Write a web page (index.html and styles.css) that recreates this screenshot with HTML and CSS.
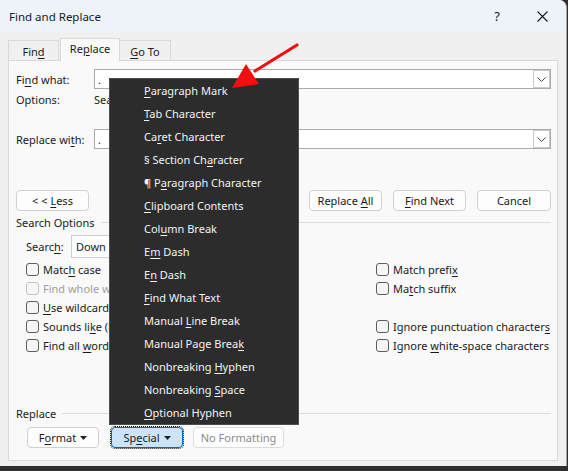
FILE: index.html
```html
<!DOCTYPE html>
<html lang="en">
<head>
    <meta charset="UTF-8">
    <title>Find and Replace</title>
    <link rel="stylesheet" href="styles.css">
</head>
<body>
    <div class="window">
        <div class="titlebar">
            <span class="title">Find and Replace</span>
            <div class="caption">
                <span class="help">?</span>
                <svg class="close" width="11" height="11" viewBox="0 0 11 11">
                    <path d="M0.5 0.5 L10.5 10.5 M10.5 0.5 L0.5 10.5" stroke="#1a1a1a" stroke-width="1.1" fill="none"/>
                </svg>
            </div>
        </div>

        <div class="tabs">
            <div class="tab tab-find"><span>Fin<u>d</u></span></div>
            <div class="tab tab-replace active"><span>Re<u>p</u>lace</span></div>
            <div class="tab tab-goto"><span><u>G</u>o To</span></div>
        </div>

        <div class="panel">
            <div class="row field-row">
                <span class="label">Fi<u>n</u>d what:</span>
                <div class="combo">
                    <span class="combo-text">.</span>
                    <span class="combo-btn">
                        <svg width="9" height="5" viewBox="0 0 9 5"><path d="M0.5 0.5 L4.5 4.5 L8.5 0.5" stroke="#444" fill="none"/></svg>
                    </span>
                </div>
            </div>
            <div class="row options-row">
                <span class="label">Options:</span>
                <span>Search Down</span>
            </div>
            <div class="row field-row replace-row">
                <span class="label">Replace wi<u>t</u>h:</span>
                <div class="combo">
                    <span class="combo-text">.</span>
                    <span class="combo-btn">
                        <svg width="9" height="5" viewBox="0 0 9 5"><path d="M0.5 0.5 L4.5 4.5 L8.5 0.5" stroke="#444" fill="none"/></svg>
                    </span>
                </div>
            </div>

            <div class="row button-row">
                <div class="btn btn-less"><span>&lt; &lt; <u>L</u>ess</span></div>
                <div class="spacer"></div>
                <div class="btn btn-wide"><span>Replace <u>A</u>ll</span></div>
                <div class="btn btn-wide"><span><u>F</u>ind Next</span></div>
                <div class="btn btn-cancel"><span>Cancel</span></div>
            </div>

            <div class="section">
                <span>Search Options</span>
                <div class="rule"></div>
            </div>

            <div class="row search-row">
                <span class="search-label">Searc<u>h</u>:</span>
                <div class="select">Down</div>
            </div>

            <div class="checks">
                <div class="check-col left-col">
                    <label class="check"><span class="box"></span><span>Matc<u>h</u> case</span></label>
                    <label class="check disabled"><span class="box"></span><span>Find whole words onl<u>y</u></span></label>
                    <label class="check"><span class="box"></span><span><u>U</u>se wildcards</span></label>
                    <label class="check"><span class="box"></span><span>Sounds li<u>k</u>e (English)</span></label>
                    <label class="check"><span class="box"></span><span>Find all <u>w</u>ord forms (English)</span></label>
                </div>
                <div class="check-col right-col">
                    <label class="check"><span class="box"></span><span>Match prefi<u>x</u></span></label>
                    <label class="check"><span class="box"></span><span>Ma<u>t</u>ch suffix</span></label>
                    <div class="check empty"></div>
                    <label class="check"><span class="box"></span><span>Ignore punctuation character<u>s</u></span></label>
                    <label class="check"><span class="box"></span><span>Ignore <u>w</u>hite-space characters</span></label>
                </div>
            </div>

            <div class="section replace-section">
                <span>Replace</span>
                <div class="rule"></div>
            </div>

            <div class="row bottom-row">
                <div class="btn btn-format"><span>F<u>o</u>rmat</span><svg class="caret" width="7" height="4" viewBox="0 0 7 4"><path d="M0 0 H7 L3.5 4 Z" fill="#222"/></svg></div>
                <div class="btn btn-special"><span>Sp<u>e</u>cial</span><svg class="caret" width="7" height="4" viewBox="0 0 7 4"><path d="M0 0 H7 L3.5 4 Z" fill="#222"/></svg></div>
                <div class="btn btn-noformat"><span>No Formatting</span></div>
            </div>
        </div>

        <div class="menu">
            <div class="item"><u>P</u>aragraph Mark</div>
            <div class="item"><u>T</u>ab Character</div>
            <div class="item">Ca<u>r</u>et Character</div>
            <div class="item">§ Section Ch<u>a</u>racter</div>
            <div class="item">¶ P<u>a</u>ragraph Character</div>
            <div class="item"><u>C</u>lipboard Contents</div>
            <div class="item">Col<u>u</u>mn Break</div>
            <div class="item">E<u>m</u> Dash</div>
            <div class="item">E<u>n</u> Dash</div>
            <div class="item"><u>F</u>ind What Text</div>
            <div class="item">Manual <u>L</u>ine Break</div>
            <div class="item">Manual Page Brea<u>k</u></div>
            <div class="item">Nonbreaking <u>H</u>yphen</div>
            <div class="item">Nonbreaking <u>S</u>pace</div>
            <div class="item"><u>O</u>ptional Hyphen</div>
        </div>

        <svg class="arrow" width="80" height="60" viewBox="0 0 80 60">
            <!-- shaft from (297,45) toward the tip at (232,88); svg origin is (225,35) -->
            <path d="M72 10 L30 36" stroke="#f01010" stroke-width="3.2" stroke-linecap="round" fill="none"/>
            <path d="M7 53 L21 29 L34 49 Z" fill="#f01010"/>
        </svg>
    </div>
</body>
</html>
```

FILE: styles.css
```css
* {
    box-sizing: border-box;
}
body {
    margin: 0;
    background-color: #2e2e2e;
    font-family: 'Noto Sans', 'Open Sans', sans-serif;
    font-size: 11px;
    color: #1a1a1a;
}
u {
    text-underline-offset: 2px;
    text-decoration-thickness: 1px;
}
.window {
    position: relative;
    width: 567px;
    height: 466px;
    background-color: #f0f0f0;
    border-top-right-radius: 8px;
    border-right: 1px solid #a8a8a8;
    overflow: hidden;
}
.titlebar {
    height: 32px;
    background-color: #eef2f9;
    display: flex;
    align-items: center;
    justify-content: space-between;
    padding: 0 0 0 9px;
}
.title {
    font-size: 11.5px;
}
.caption {
    display: flex;
    align-items: center;
}
.help {
    font-size: 13px;
    margin-right: 37px;
}
.close {
    margin-right: 18px;
}
.tabs {
    height: 28px;
    display: flex;
    align-items: flex-end;
    padding-left: 8px;
}
.tab {
    height: 20px;
    border: 1px solid #d9d9d9;
    border-bottom: none;
    background-color: #f0f0f0;
    display: flex;
    align-items: center;
    justify-content: center;
    padding-top: 2px;
}
.tab-find {
    width: 51px;
    margin-right: 1px;
}
.tab-replace {
    width: 60px;
}
.tab-goto {
    width: 51px;
    border-left: none;
}
.tab.active {
    height: 23px;
    background-color: #f9f9f9;
    margin-bottom: -1px;
    position: relative;
    z-index: 1;
    padding-top: 0;
    padding-bottom: 3px;
}
.panel {
    margin: 0 8px;
    height: 401px;
    background-color: #f9f9f9;
    border: 1px solid #d9d9d9;
    padding: 0 6px 0 7px;
}
.row {
    display: flex;
    align-items: center;
}
.label {
    width: 78px;
    flex-shrink: 0;
}
.field-row {
    margin-top: 8px;
    height: 20px;
}
.replace-row {
    margin-top: 20px;
}
.options-row {
    height: 20px;
}
.combo {
    flex: 1;
    height: 20px;
    background-color: #fff;
    border: 1px solid #ababab;
    display: flex;
    align-items: center;
    justify-content: space-between;
}
.combo-text {
    padding-left: 3px;
}
.combo-btn {
    width: 17px;
    height: 18px;
    border: 1px solid #c9c9c9;
    background-color: #fff;
    display: flex;
    align-items: center;
    justify-content: center;
}
.btn {
    height: 21px;
    background-color: #fdfdfd;
    border: 1px solid #d0d0d0;
    border-radius: 4px;
    display: flex;
    align-items: center;
    justify-content: center;
    white-space: nowrap;
}
.button-row {
    margin-top: 41px;
}
.spacer {
    flex: 1;
}
.btn-less {
    width: 73px;
}
.btn-wide {
    width: 73px;
    margin-right: 11px;
}
.btn-cancel {
    width: 74px;
}
.section {
    height: 20px;
    margin-top: 1px;
    display: flex;
    align-items: center;
}
.rule {
    flex: 1;
    height: 1px;
    background-color: #dcdcdc;
    margin-left: 6px;
}
.search-row {
    margin-top: 3px;
    height: 23px;
    padding-left: 10px;
}
.search-label {
    width: 45px;
}
.select {
    width: 150px;
    height: 23px;
    border: 1px solid #cfcfcf;
    background-color: #fff;
    display: flex;
    align-items: center;
    padding-left: 4px;
}
.checks {
    margin-top: 2px;
    display: grid;
    grid-template-columns: 350px 1fr;
    padding-left: 10px;
}
.check {
    height: 19px;
    display: flex;
    align-items: center;
    white-space: nowrap;
}
.box {
    width: 13px;
    height: 13px;
    border: 1px solid #5e5e5e;
    border-radius: 3px;
    background-color: #f6f6f6;
    margin-right: 4px;
    flex-shrink: 0;
}
.check.disabled {
    color: #a0a0a0;
}
.check.disabled .box {
    border-color: #c4c4c4;
}
.replace-section {
    margin-top: 48px;
}
.bottom-row {
    margin-top: 4px;
    padding-left: 11px;
}
.caret {
    margin-left: 4px;
}
.btn-format {
    width: 72px;
    margin-right: 12px;
}
.btn-special {
    width: 72px;
    margin-right: 10px;
    background-color: #cce4f7;
    border-color: #0067c0;
    outline: 1px dotted #111;
}
.btn-noformat {
    width: 91px;
    color: #8c8c8c;
    border-color: #dcdcdc;
}
.menu {
    position: absolute;
    left: 109px;
    top: 78px;
    width: 190px;
    background-color: #2c2c2c;
    border: 1px solid #4d4d4d;
    color: #f3f3f3;
    z-index: 5;
}
.item {
    height: 23px;
    line-height: 23px;
    padding-left: 34px;
    white-space: nowrap;
}
.arrow {
    position: absolute;
    left: 225px;
    top: 35px;
    z-index: 6;
}
```
